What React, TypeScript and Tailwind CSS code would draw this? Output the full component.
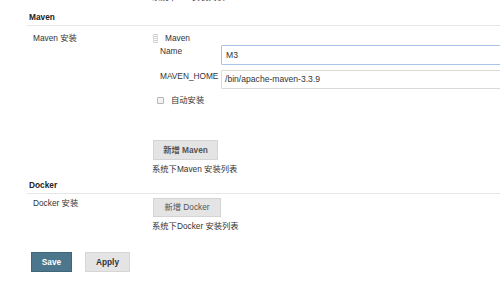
import React from "react";

const font = { fontFamily: '"Liberation Sans", Arial, "Noto Sans CJK SC", sans-serif' };

function Grip() {
  return (
    <svg width="5" height="9" viewBox="0 0 5 9" className="block">
      {[0, 2, 4, 6, 8].map((y) => (
        <rect key={y} x="0" y={y} width="5" height="1" fill="#cfcfcf" />
      ))}
      <rect x="0" y="0" width="1" height="9" fill="#dcdcdc" />
      <rect x="4" y="0" width="1" height="9" fill="#dcdcdc" />
    </svg>
  );
}

function Check() {
  return <div className="w-[7px] h-[7px] border border-[#b5b5b5] bg-[#f3f3f3] rounded-[1px]" />;
}

export default function App() {
  return (
    <div className="w-[500px] h-[286px] overflow-hidden bg-white text-[#333] text-[8.3px]" style={font}>
      <div className="pl-[152px] mt-[-8px] h-[12px] leading-[10px]">系统下Ant 安装列表</div>

      {/* Maven header */}
      <div className="ml-[27px] pl-[2px] pt-[8px] pb-[3px] leading-[10px] font-bold text-[#222] border-b border-[#e6e6e6]">
        Maven
      </div>

      <div className="flex">
        <div className="w-[152px] shrink-0 pl-[33px] pt-[7px] leading-[10px]">Maven 安装</div>
        <div className="flex-1 min-w-0 flex flex-col">
          <div className="flex items-center pt-[7px] leading-[10px] pl-[1px] gap-[7px]">
            <Grip />
            <span>Maven</span>
          </div>
          <div className="flex mt-[2px]">
            <div className="w-[69px] shrink-0 pl-[8px] pt-[1px] leading-[10px]">Name</div>
            <div className="w-[290px] shrink-0 h-[20px] border border-[#a9c4e6] rounded-[1px] px-[4px] flex items-center text-[8.6px] text-[#333]">
              M3
            </div>
          </div>
          <div className="flex mt-[5px]">
            <div className="w-[69px] shrink-0 pl-[8px] pt-[1px] leading-[10px]">MAVEN_HOME</div>
            <div className="w-[290px] shrink-0 h-[19px] border border-[#d9d9d9] rounded-[1px] px-[3px] flex items-center text-[8.6px] text-[#333]">
              /bin/apache-maven-3.3.9
            </div>
          </div>
          <div className="flex items-center mt-[6px] leading-[10px] pl-[5px] gap-[7px]">
            <Check />
            <span>自动安装</span>
          </div>
          <div className="mt-[35px] pl-[1px]">
            <button className="w-[65px] h-[20px] bg-[#e4e4e4] border border-[#d4d4d4] font-bold text-[#555] text-[8.3px] leading-[18px]">
              新增 Maven
            </button>
          </div>
          <div className="mt-[4px] leading-[10px]">系统下Maven 安装列表</div>
        </div>
      </div>

      {/* Docker header */}
      <div className="ml-[27px] pl-[2px] pt-[6px] pb-[3px] leading-[10px] font-bold text-[#222] border-b border-[#e6e6e6]">
        Docker
      </div>

      <div className="flex">
        <div className="w-[152px] shrink-0 pl-[33px] pt-[4px] leading-[10px]">Docker 安装</div>
        <div className="flex-1 min-w-0 flex flex-col">
          <div className="pt-[4px] pl-[1px]">
            <button className="w-[68px] h-[19px] bg-[#e4e4e4] border border-[#d4d4d4] text-[#555] text-[8.3px] leading-[17px]">
              新增 Docker
            </button>
          </div>
          <div className="mt-[4px] leading-[10px]">系统下Docker 安装列表</div>
        </div>
      </div>

      <div className="flex mt-[21px] pl-[31px] gap-[13px]">
        <button className="w-[41px] h-[20px] bg-[#4b768c] border border-[#3f6679] text-white font-bold text-[8.3px]">
          Save
        </button>
        <button className="w-[45px] h-[20px] bg-[#e4e4e4] border border-[#d6d6d6] text-[#333] font-bold text-[8.3px]">
          Apply
        </button>
      </div>
    </div>
  );
}
